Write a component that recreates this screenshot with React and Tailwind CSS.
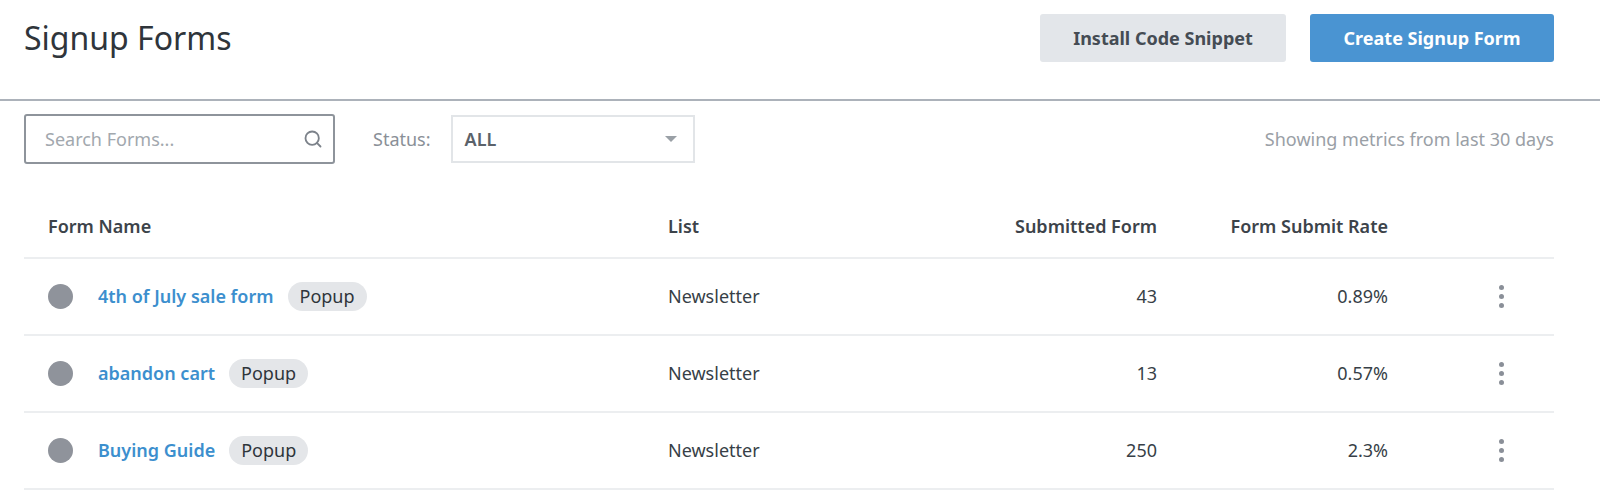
import { Search } from "lucide-react";

const rows = [
	{ name: "4th of July sale form", list: "Newsletter", submitted: "43", rate: "0.89%" },
	{ name: "abandon cart", list: "Newsletter", submitted: "13", rate: "0.57%" },
	{ name: "Buying Guide", list: "Newsletter", submitted: "250", rate: "2.3%" },
];

const Kebab = () => (
	<div className="flex flex-col items-center gap-[4px]">
		<span className="w-[5px] h-[5px] rounded-full bg-[#8a8f98]" />
		<span className="w-[5px] h-[5px] rounded-full bg-[#8a8f98]" />
		<span className="w-[5px] h-[5px] rounded-full bg-[#8a8f98]" />
	</div>
);

const App = () => {
	return (
		<div className="w-[1600px] h-[497px] bg-white font-['Lato','Liberation_Sans',sans-serif] text-[#373f47] overflow-hidden">
			<header className="h-[101px] flex items-start justify-between px-6 pt-[14px] border-b-2 border-[#acb2ba]">
				<h1 className="text-[32px] font-normal text-[#2f353b] leading-[48px]">Signup Forms</h1>
				<div className="flex gap-6 mr-[22px]">
					<button className="w-[246px] h-[48px] rounded-[3px] bg-[#e3e6ea] text-[18px] font-bold text-[#454c54]">
						Install Code Snippet
					</button>
					<button className="w-[244px] h-[48px] rounded-[3px] bg-[#4a94d2] text-[18px] font-bold text-white">
						Create Signup Form
					</button>
				</div>
			</header>

			<div className="flex items-center px-6 mt-[13px] mr-[22px]">
				<div className="w-[311px] h-[50px] border-2 border-[#8e949b] rounded-[3px] flex items-center justify-between pl-[19px] pr-[10px]">
					<span className="text-[18px] text-[#a2a8ae]">Search Forms...</span>
					<Search size={20} strokeWidth={2.2} className="text-[#7c828a]" />
				</div>
				<span className="ml-[38px] text-[18px] text-[#8a9097]">Status:</span>
				<div className="ml-[20px] w-[244px] h-[48px] border-2 border-[#e2e5e8] flex items-center justify-between pl-[12px] pr-[16px]">
					<span className="text-[18px] font-semibold text-[#5b626a]">ALL</span>
					<span className="w-0 h-0 border-l-[6px] border-r-[6px] border-t-[6px] border-l-transparent border-r-transparent border-t-[#9aa0a6]" />
				</div>
				<span className="ml-auto text-[18px] text-[#9aa0a6]">Showing metrics from last 30 days</span>
			</div>

			<div className="mx-6 mr-[46px] mt-[31px]">
				<div className="grid grid-cols-[644px_300px_189px_231px_1fr] h-[64px] items-center border-b-2 border-[#eceef0] text-[18px] font-semibold text-[#3c434a]">
					<span className="pl-6">Form Name</span>
					<span>List</span>
					<span className="text-right">Submitted Form</span>
					<span className="text-right">Form Submit Rate</span>
					<span />
				</div>
				{rows.map((row) => (
					<div
						key={row.name}
						className="grid grid-cols-[644px_300px_189px_231px_1fr] h-[77px] items-center border-b-2 border-[#eceef0] text-[18px]"
					>
						<div className="flex items-center pl-6">
							<span className="w-[25px] h-[25px] rounded-full bg-[#8f939b]" />
							<a className="ml-[25px] font-semibold text-[#3c8fce]">{row.name}</a>
							<span className="ml-[14px] px-[12px] h-[29px] leading-[29px] rounded-full bg-[#e4e6e9] text-[#2f353b]">
								Popup
							</span>
						</div>
						<span className="text-[#373f47]">{row.list}</span>
						<span className="text-right">{row.submitted}</span>
						<span className="text-right">{row.rate}</span>
						<div className="flex justify-end pr-[50px]">
							<Kebab />
						</div>
					</div>
				))}
			</div>
		</div>
	);
};

export default App;
